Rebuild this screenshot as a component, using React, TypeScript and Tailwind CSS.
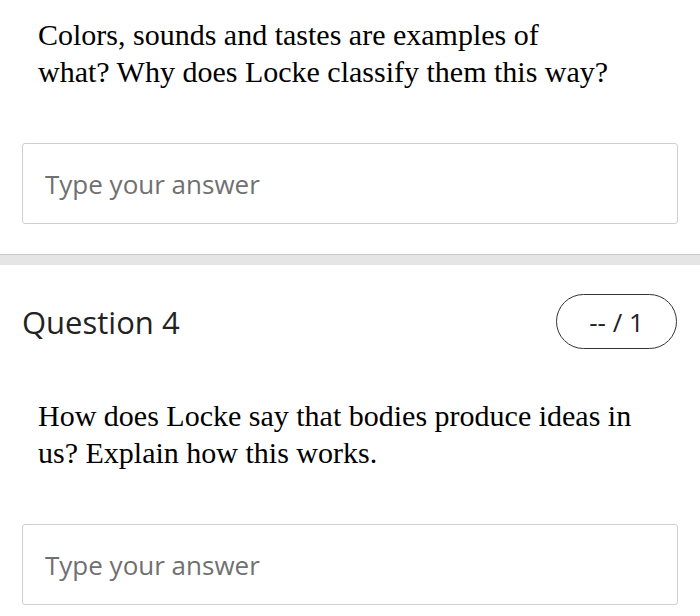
import React from "react";

const serif = { fontFamily: '"Liberation Serif", "Times New Roman", serif' };
const sans = { fontFamily: '"Open Sans", "Noto Sans", sans-serif' };

function AnswerBox() {
  return (
    <div className="mx-[22px] flex h-[81px] items-center rounded-[3px] border border-[#cfcfcf] bg-white px-[22px]">
      <span className="text-[26px] leading-[34px] text-[#707070]" style={sans}>
        Type your answer
      </span>
    </div>
  );
}

export default function App() {
  return (
    <div className="w-[700px] h-[616px] overflow-hidden bg-white">
      <div className="pt-[16px]">
        <p className="px-[38px] text-[30px] leading-[37px] text-black" style={serif}>
          Colors, sounds and tastes are examples of
          <br />
          what? Why does Locke classify them this way?
        </p>
        <div className="mt-[53px]">
          <AnswerBox />
        </div>
      </div>
      <div className="mt-[30px] border-t border-[#c9c9c9] h-[11px] bg-[#e5e5e5]" />
      <div className="pt-[29px]">
        <div className="flex items-center justify-between pl-[22px] pr-[23px]">
          <h2 className="text-[31px] leading-[40px] font-medium text-[#222]" style={sans}>
            Question 4
          </h2>
          <div className="flex h-[55px] w-[121px] items-center justify-center rounded-full border-[1.5px] border-[#333]">
            <span className="text-[26px] leading-[34px] text-[#222]" style={sans}>
              -- / 1
            </span>
          </div>
        </div>
        <p className="mt-[48px] px-[38px] text-[30px] leading-[37px] text-black" style={serif}>
          How does Locke say that bodies produce ideas in
          <br />
          us? Explain how this works.
        </p>
        <div className="mt-[53px]">
          <AnswerBox />
        </div>
      </div>
    </div>
  );
}
